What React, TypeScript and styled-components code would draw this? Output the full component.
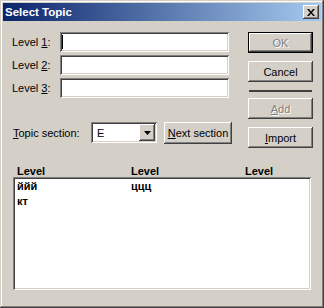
import styled, { createGlobalStyle } from "styled-components";

const GlobalStyle = createGlobalStyle`
	html, body {
		margin: 0;
		background: #d4d0c8;
		font-family: "Liberation Sans", Arial, sans-serif;
		font-size: 11px;
	}
`;

const raised = `
	box-shadow: inset -1px -1px #404040, inset 1px 1px #ffffff,
		inset -2px -2px #808080, inset 2px 2px #d4d0c8;
`;

const sunken = `
	box-shadow: inset 1px 1px #808080, inset -1px -1px #ffffff,
		inset 2px 2px #404040, inset -2px -2px #d4d0c8;
`;

const Window = styled.div`
	box-sizing: border-box;
	width: 324px;
	height: 308px;
	padding: 3px;
	background: #d4d0c8;
	display: flex;
	flex-direction: column;
	box-shadow: inset -1px -1px #404040, inset 1px 1px #d4d0c8,
		inset -2px -2px #808080, inset 2px 2px #ffffff;
`;

const TitleBar = styled.div`
	height: 18px;
	display: flex;
	align-items: center;
	justify-content: space-between;
	padding: 0 2px;
	background: linear-gradient(to right, #0a246a, #a6caf0);
	color: #ffffff;
	font-weight: bold;
	font-size: 11.5px;
`;

const CloseButton = styled.div`
	width: 16px;
	height: 14px;
	display: flex;
	align-items: center;
	justify-content: center;
	background: #d4d0c8;
	${raised}
`;

const Body = styled.div`
	flex: 1;
	display: flex;
	flex-direction: column;
	padding: 11px 8px 0 9px;
`;

const TopArea = styled.div`
	display: flex;
	justify-content: space-between;
	align-items: flex-start;
`;

const Fields = styled.div`
	width: 221px;
	display: flex;
	flex-direction: column;
`;

const FieldRow = styled.div`
	display: flex;
	align-items: center;
	height: 20px;
	& + & {
		margin-top: 3px;
	}
`;

const Label = styled.span<{ $width: number }>`
	width: ${(p) => p.$width}px;
	color: #000000;
	white-space: nowrap;
`;

const TextBox = styled.div`
	box-sizing: border-box;
	width: 169px;
	height: 20px;
	padding-left: 2px;
	display: flex;
	align-items: center;
	background: #ffffff;
	${sunken}
`;

const Caret = styled.span`
	display: block;
	width: 1px;
	height: 14px;
	background: #000000;
`;

const TopicRow = styled.div`
	display: flex;
	align-items: center;
	height: 23px;
	margin-top: 23px;
	padding-left: 1px;
`;

const Combo = styled.div`
	box-sizing: border-box;
	width: 66px;
	height: 21px;
	padding: 2px;
	display: flex;
	align-items: center;
	justify-content: space-between;
	background: #ffffff;
	${sunken}
`;

const ComboText = styled.span`
	padding-left: 4px;
`;

const DropButton = styled.div`
	width: 16px;
	height: 17px;
	display: flex;
	align-items: center;
	justify-content: center;
	background: #d4d0c8;
	${raised}
`;

const Button = styled.div<{ $width?: number; $height?: number; $default?: boolean; $disabled?: boolean }>`
	box-sizing: border-box;
	width: ${(p) => (p.$width ? `${p.$width}px` : "100%")};
	height: ${(p) => p.$height ?? 21}px;
	display: flex;
	align-items: center;
	justify-content: center;
	background: #d4d0c8;
	color: ${(p) => (p.$disabled ? "#808080" : "#000000")};
	text-shadow: ${(p) => (p.$disabled ? "1px 1px #ffffff" : "none")};
	box-shadow: ${(p) =>
		p.$default
			? "inset 0 0 0 1px #000000, inset -2px -2px #404040, inset 2px 2px #ffffff, inset -3px -3px #808080"
			: "inset -1px -1px #404040, inset 1px 1px #ffffff, inset -2px -2px #808080, inset 2px 2px #d4d0c8"};
`;

const NextButton = styled(Button)`
	margin-left: 7px;
`;

const Buttons = styled.div`
	width: 65px;
	display: flex;
	flex-direction: column;
	gap: 8px;
`;

const Separator = styled.div`
	height: 2px;
	margin: 0 1px -2px;
	background: #404040;
`;

const ListSection = styled.div`
	margin-top: 17px;
	padding-left: 1px;
	display: flex;
	flex-direction: column;
`;

const Columns = styled.div`
	display: grid;
	grid-template-columns: 114px 114px 1fr;
	font-weight: bold;
	color: #000000;
`;

const Header = styled(Columns)`
	height: 12px;
	line-height: 12px;
	padding-left: 4px;
`;

const List = styled.div`
	box-sizing: border-box;
	width: 298px;
	height: 113px;
	padding: 2px;
	background: #ffffff;
	${sunken}
`;

const Row = styled(Columns)`
	height: 15px;
	line-height: 15px;
	padding-left: 2px;
`;

const rows = [
	["ййй", "ццц", ""],
	["кт", "", ""],
];

export default function App() {
	return (
		<Window>
			<GlobalStyle />
			<TitleBar>
				<span>Select Topic</span>
				<CloseButton>
					<svg width="8" height="7" viewBox="0 0 8 7">
						<path d="M0 0h2l2 2.4L6 0h2L5 3.5 8 7H6L4 4.6 2 7H0l3-3.5z" fill="#000" />
					</svg>
				</CloseButton>
			</TitleBar>
			<Body>
				<TopArea>
					<Fields>
						<FieldRow>
							<Label $width={48}>
								Level <u>1</u>:
							</Label>
							<TextBox>
								<Caret />
							</TextBox>
						</FieldRow>
						<FieldRow>
							<Label $width={48}>
								Level <u>2</u>:
							</Label>
							<TextBox />
						</FieldRow>
						<FieldRow>
							<Label $width={48}>
								Level <u>3</u>:
							</Label>
							<TextBox />
						</FieldRow>
						<TopicRow>
							<Label $width={78}>
								<u>T</u>opic section:
							</Label>
							<Combo>
								<ComboText>E</ComboText>
								<DropButton>
									<svg width="7" height="4" viewBox="0 0 7 4">
										<polygon points="0,0 7,0 3.5,4" fill="#000" />
									</svg>
								</DropButton>
							</Combo>
							<NextButton $width={68} $height={22}>
								<span>
									<u>N</u>ext section
								</span>
							</NextButton>
						</TopicRow>
					</Fields>
					<Buttons>
						<Button $default $disabled>
							OK
						</Button>
						<Button>Cancel</Button>
						<Separator />
						<Button $disabled>
							<span>
								<u>A</u>dd
							</span>
						</Button>
						<Button>
							<span>
								<u>I</u>mport
							</span>
						</Button>
					</Buttons>
				</TopArea>
				<ListSection>
					<Header>
						<span>Level</span>
						<span>Level</span>
						<span>Level</span>
					</Header>
					<List>
						{rows.map((r, i) => (
							<Row key={i}>
								{r.map((c, j) => (
									<span key={j}>{c}</span>
								))}
							</Row>
						))}
					</List>
				</ListSection>
			</Body>
		</Window>
	);
}
